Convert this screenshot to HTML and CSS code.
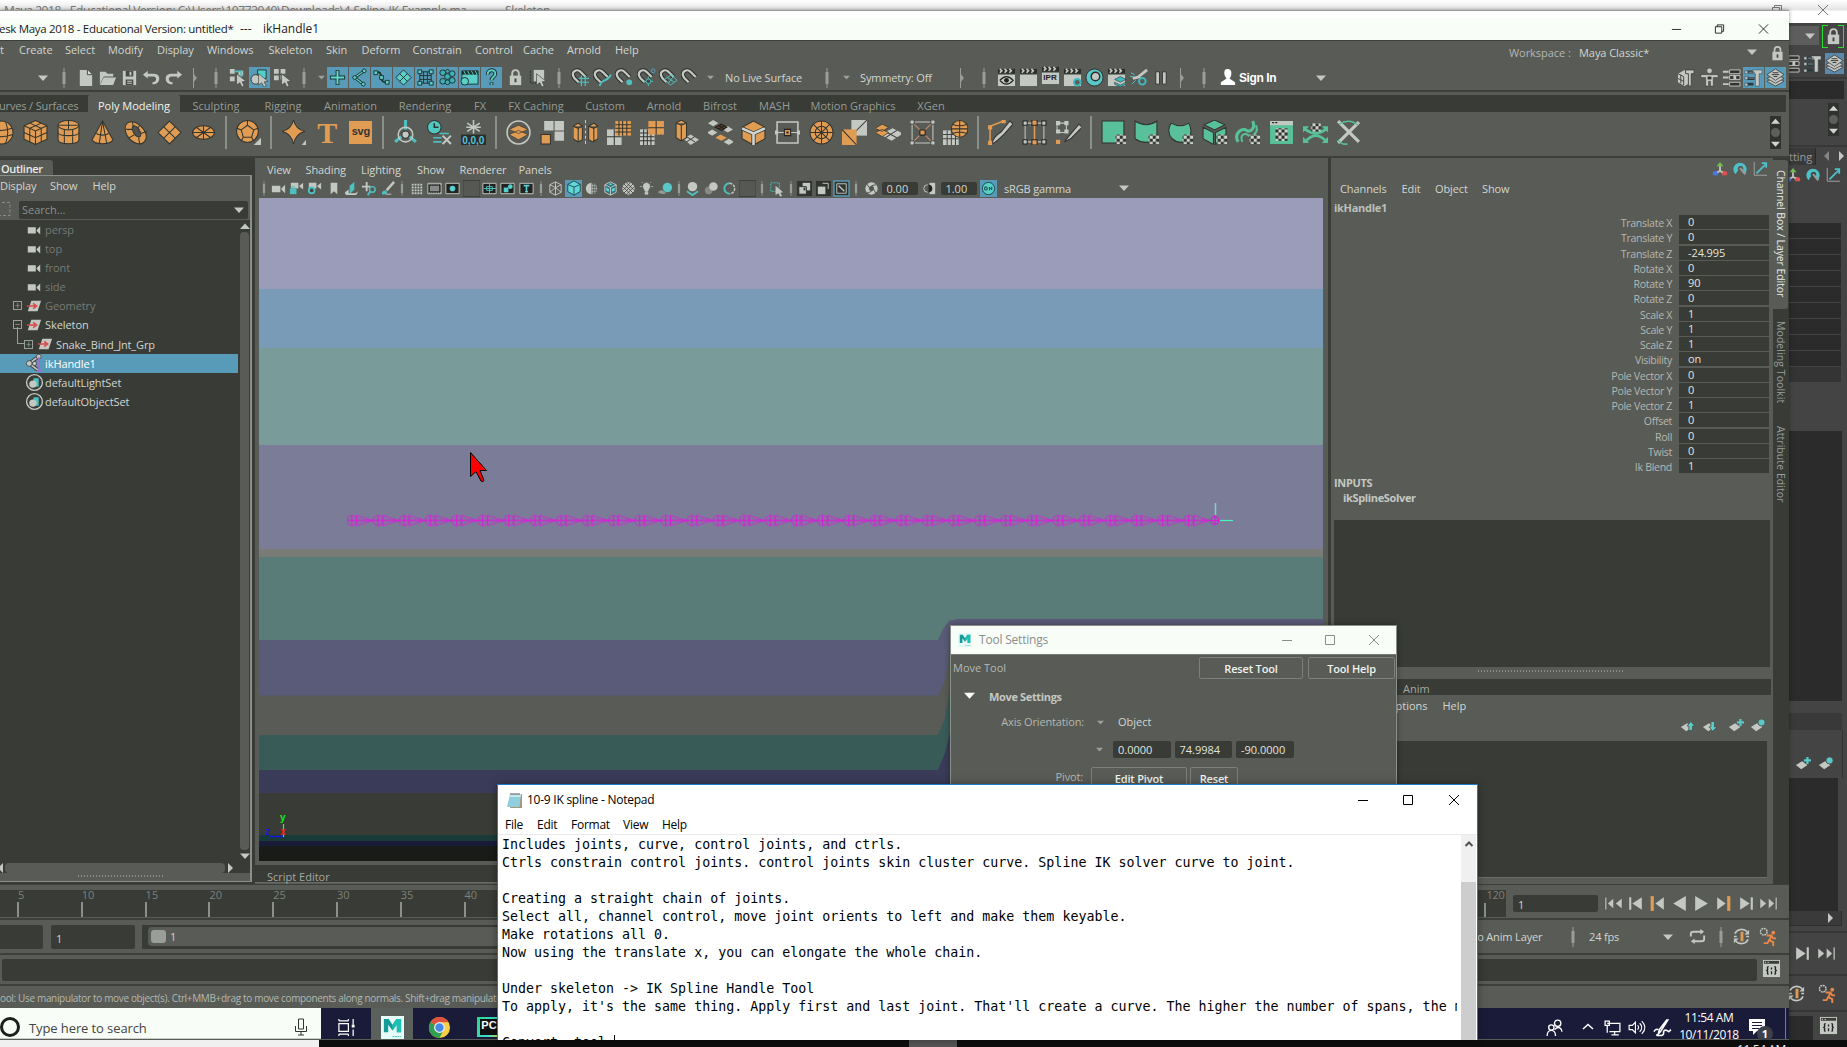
FILE: index.html
```html
<!DOCTYPE html>
<html lang="en">
<head>
<meta charset="utf-8">
<title>Maya</title>
<link rel="stylesheet" href="styles.css">
</head>
<body>
<svg class="sprite" aria-hidden="true">
<defs>
<pattern id="chk" width="6" height="6" patternUnits="userSpaceOnUse"><rect width="6" height="6" fill="#30332e"/><path d="M0 0h3v3H0zM3 3h3v3H3z" fill="#d0d4ce"/></pattern>
<pattern id="joints" x="87.5" y="312.500" width="26.15" height="20" patternUnits="userSpaceOnUse"><g fill="none" stroke="#e312e0"><circle cx="5.5" cy="10" r="5" opacity=".75"/><path d="M5.5 4.5v11M10.5 4.5v11" /><path d="M0 10h26.15" stroke-width="1.3"/><path d="M10.5 5l15.5 5-15.5 5" opacity=".75"/></g></pattern>
</defs>
<symbol id="down" viewBox="0 0 10 10"><path d="M0 2.5h10L5 8z"/></symbol>
<symbol id="up" viewBox="0 0 10 10"><path d="M0 8h10L5 2.5z"/></symbol>
<symbol id="rt" viewBox="0 0 10 10"><path d="M3 0v10l5-5z"/></symbol>
<symbol id="lf" viewBox="0 0 10 10"><path d="M8 0v10L3 5z"/></symbol>
<symbol id="sep" viewBox="0 0 6 20"><path d="M3 0v20" stroke="#9a9e98" fill="none"/><path d="M3 4v12" stroke="#9a9e98" stroke-width="3"/></symbol>
<symbol id="endsep" viewBox="0 0 6 20"><path d="M1.5 0v20" stroke="#9a9e98" fill="none"/><path d="M1 5l4 5-4 5z" fill="#9a9e98"/></symbol>
<symbol id="min" viewBox="0 0 12 12"><path d="M1 6.5h10" stroke="currentColor" fill="none"/></symbol>
<symbol id="max" viewBox="0 0 12 12"><path d="M1.5 1.5h9v9h-9z" stroke="currentColor" fill="none"/></symbol>
<symbol id="rest" viewBox="0 0 12 12"><path d="M1.5 3.5h7v7h-7zM3.5 3.500v-2h7v7h-2" stroke="currentColor" fill="none"/></symbol>
<symbol id="x" viewBox="0 0 12 12"><path d="M1 1l10 10M11 1L1 11" stroke="currentColor" fill="none"/></symbol>
<symbol id="new" viewBox="0 0 20 20"><path d="M4 2h8l5 5v12H4z"/><path d="M12 2v5h5" stroke="#444" fill="#ddd"/></symbol>
<symbol id="open" viewBox="0 0 20 20"><path d="M2 17V4h6l2 2h6v3H6z"/><path d="M6 10h13l-3 8H2z"/></symbol>
<symbol id="save" viewBox="0 0 20 20"><path d="M3 3h14v15H3z"/><path d="M6 3h8v6H6zM6 12h8v6H6z" fill="#474a45"/><path d="M10 4h2v4h-2zM7.500 13.500h5v1h-5zM7.500 15.500h5v1h-5z"/></symbol>
<symbol id="undo" viewBox="0 0 20 20"><path d="M6 3v8L1 7zM5 6h8c7 0 7 10 0 11h-2v-2c5 0 5-6 1-6H5z"/></symbol>
<symbol id="redo" viewBox="0 0 20 20"><path d="M14 3v8l5-4zM15 6H7c-7 0-7 10 0 11h2v-2c-5 0-5-6-1-6h7z"/></symbol>
<symbol id="cur" viewBox="0 0 20 20"><path d="M9 6l10 8-4 .5 2 4.500-2.500 1-2-4.500L9 18z" stroke="#444" stroke-width=".7"/></symbol>
<symbol id="selh" viewBox="0 0 20 20"><path d="M2 1h5v5H2zM2 9h5v5H2zM11 3h5v5h-5z"/><path d="M7 3.500h7v6" stroke="#4fc0c0" stroke-width="2" fill="none"/><use href="#cur"/></symbol>
<symbol id="selo" viewBox="0 0 20 20"><path d="M8 2h9v9H8z" fill="#4fd0c8" stroke="#333"/><circle cx="6" cy="12" r="5" stroke="#333"/><use href="#cur"/></symbol>
<symbol id="selc" viewBox="0 0 20 20"><path d="M1 1h5v5H1zM8 1h5v5H8zM1 8h5v5H1zM8 8h3v4H8z"/><use href="#cur"/></symbol>
<symbol id="m1" viewBox="0 0 20 20"><path d="M10 2v16M2 10h16" stroke="#20322f" stroke-width="4"/><path d="M10 3v14M3 10h14" stroke="#5adcd0" stroke-width="2"/></symbol>
<symbol id="m2" viewBox="0 0 20 20"><path d="M15 3L5 10l9 7" stroke="#20322f" stroke-width="3" fill="none"/><path d="M15 3L5 10l9 7" stroke="#5ad0c8" stroke-width="1.300" fill="none"/><g fill="#5ad0c8" stroke="#20322f"><circle cx="15" cy="3" r="2"/><circle cx="5" cy="10" r="2"/><circle cx="14" cy="17" r="2"/></g></symbol>
<symbol id="m3" viewBox="0 0 20 20"><path d="M3 5c12-4 1 12 14 10" stroke="#20322f" stroke-width="2" fill="none"/><path d="M2 3h4v4H2zM8 8h4v4H8zM14 13h4v4h-4z" fill="#5ad0c8" stroke="#20322f"/></symbol>
<symbol id="m4" viewBox="0 0 20 20"><path d="M10 2l8 8-8 8-8-8z" fill="#5ad0c8" stroke="#20322f"/><path d="M6 6l8 8M14 6l-8 8" stroke="#20322f"/></symbol>
<symbol id="m5" viewBox="0 0 20 20"><path d="M4 4h12v12H4zM8 4v12M12 4v12M4 8h12M4 12h12" fill="none" stroke="#20322f"/><path d="M2 2h4v4H2zM14 2h4v4h-4zM2 14h4v4H2zM14 14h4v4h-4z" fill="#5ad0c8" stroke="#20322f"/></symbol>
<symbol id="m6" viewBox="0 0 20 20"><g fill="#3fb0b8" stroke="#20322f"><circle cx="5" cy="5" r="3"/><circle cx="10" cy="3.500" r="2"/><circle cx="15" cy="6" r="3"/><circle cx="10" cy="9" r="3"/><circle cx="5" cy="14" r="3"/><circle cx="10" cy="15" r="2.500"/><circle cx="15" cy="13" r="3"/></g></symbol>
<symbol id="m7" viewBox="0 0 20 20"><path d="M2 3h17v14H2z" fill="#5ad0c8" stroke="#20322f"/><path d="M2 3h17v4H2z" fill="#20322f"/><path d="M4 3l2 4M8 3l2 4M12 3l2 4M16 3l2 4" stroke="#5ad0c8"/><circle cx="5" cy="14" r="4" fill="#5ad0c8" stroke="#20322f"/></symbol>
<symbol id="m8" viewBox="0 0 20 20"><path d="M6 7c0-6 8-6 8-1 0 4-4 3-4 7M10 15v3" stroke="#20322f" stroke-width="4" fill="none"/><path d="M6 7c0-6 8-6 8-1 0 4-4 3-4 7M10 15.500v2" stroke="#5ad0c8" stroke-width="2" fill="none"/></symbol>
<symbol id="lock" viewBox="0 0 20 20"><path d="M4 8h12v10H4z"/><path d="M6.500 9V6c0-5 7-5 7 0v3" fill="none" stroke="#c4c8c2" stroke-width="2"/><path d="M9 11h2v4H9z" fill="#444"/></symbol>
<symbol id="selm" viewBox="0 0 20 20"><path d="M6 2h11v12H6z"/><path d="M2.500 3v13h10" fill="none" stroke="#20322f" stroke-dasharray="2 1.500"/><use href="#cur"/></symbol>
<symbol id="mag" viewBox="0 0 20 20"><path d="M8 15L3.500 10.500c-5-6 3-11 7-6l5 5" fill="none" stroke="#2b2e2a" stroke-width="4.500"/><path d="M8 15L3.500 10.500c-5-6 3-11 7-6l5 5" fill="none" stroke="#c4c8c2" stroke-width="2.500"/></symbol>
<symbol id="g1" viewBox="0 0 20 20"><use href="#mag"/><path d="M11 8v11M15 8v11M8 11h11M8 15h11" stroke="#4fc0c0" stroke-width="1.300"/></symbol>
<symbol id="g2" viewBox="0 0 20 20"><use href="#mag"/><path d="M7 19c2-9 8-3 12-12" stroke="#4fc0c0" stroke-width="2" fill="none"/></symbol>
<symbol id="g3" viewBox="0 0 20 20"><use href="#mag"/><circle cx="15" cy="15" r="3" fill="#4fc0c0"/></symbol>
<symbol id="g4" viewBox="0 0 20 20"><use href="#mag"/><path d="M12 9v10M7 14h10" stroke="#4fc0c0"/><circle cx="12" cy="14" r="2.500" fill="#444" stroke="#4fc0c0"/><circle cx="17" cy="3" r="2" fill="none" stroke="#4fa0d0"/></symbol>
<symbol id="g5" viewBox="0 0 20 20"><use href="#mag"/><path d="M6 12l7-5 6 6-7 5zM9 10l7 5M15 9l-5 7" fill="none" stroke="#4fc0c0"/></symbol>
<symbol id="clap" viewBox="0 0 20 20"><path d="M1 7h18v12H1z"/><path d="M1 1h18v5H1z" fill="#2b2e2a"/><path d="M3 1l2 2-2 2M8 1l2 2-2 2M13 1l2 2-2 2" stroke="#c4c8c2" stroke-width="1.800" fill="none"/></symbol>
<symbol id="c1" viewBox="0 0 20 20"><use href="#clap"/><path d="M3 13q7-8 14 0q-7 8-14 0" fill="none" stroke="#222" stroke-width="1.300"/><circle cx="10" cy="13" r="2.500" fill="#222"/></symbol>
<symbol id="c4" viewBox="0 0 20 20"><use href="#clap"/><circle cx="15" cy="15" r="3.500" fill="#58605c" stroke="#3fb8c0" stroke-width="2"/></symbol>
<symbol id="c5" viewBox="0 0 20 20"><circle cx="10" cy="10" r="9" fill="#58c8c8" stroke="#2b2e2a"/><circle cx="11" cy="9" r="4.500" fill="#c4c8c2" stroke="#2b2e2a" stroke-width="1.500"/></symbol>
<symbol id="c6" viewBox="0 0 20 20"><use href="#clap"/><path d="M8 12l6-3 6 3-6 3zM8 15l6 3 6-3v2l-6 3-6-3z" fill="#3fb8c0" stroke="#2b2e2a" stroke-width=".6"/></symbol>
<symbol id="c7" viewBox="0 0 20 20"><path d="M19 2L9 10M4 11l8-2" stroke="#c4c8c2" stroke-width="3"/><path d="M1 9h4M3 17l4-4M2 5l4 2" stroke="#4fc0c0"/><circle cx="14" cy="14" r="3.500" fill="none" stroke="#3fb8c0" stroke-width="2"/></symbol>
<symbol id="c8" viewBox="0 0 20 20"><path d="M5 4h4v13H5zM12 4h4v13h-4z" stroke="#333"/></symbol>
<symbol id="user" viewBox="0 0 20 20"><path d="M7 3c0-3 8-3 7 3 0 3-1 4-2 5l6 4v3H3v-3l6-4C7 9 6 6 7 3z" fill="#fff"/></symbol>
<symbol id="r1" viewBox="0 0 20 20"><path d="M1 6l7-4 5 3v11l-5 3-7-4z"/><path d="M1 6l6 3v9M4 7v9M1 11l6 3" stroke="#444" fill="none"/><path d="M9 2h9v4h-3v13h-3V6H9z" stroke="#444"/></symbol>
<symbol id="r2" viewBox="0 0 20 20"><circle cx="10" cy="3" r="2.500"/><path d="M1 7h18v3h-5v9h-3v-5H9v5H6v-9H1z" stroke="#333" stroke-width=".5"/><path d="M8 9h4v3H8z" fill="#333"/></symbol>
<symbol id="r3" viewBox="0 0 20 20"><path d="M1 4h6M1 10h6M1 17h6" stroke="#c4c8c2" stroke-width="2"/><path d="M8 2h11v4H8zM8 8h11v4H8zM8 15h11v4H8z" fill="#333" stroke="#c4c8c2"/><path d="M12 8h3v4h-3z"/></symbol>
<symbol id="r4" viewBox="0 0 20 20"><path d="M3 4h8M3 11h8M3 17h7" stroke="#2b3a40" stroke-width="3"/><path d="M1 3h3v3H1zM1 9h3v3H1zM1 16h3v3H1zM5 4h6v1H5zM5 10h6v1H5zM9 2h10v4h-3v13h-4V6H9z" stroke="#2b3a40" stroke-width=".5"/></symbol>
<symbol id="r5" viewBox="0 0 20 20"><g stroke="#333" stroke-width=".8"><path d="M1 14l9 5 9-5-9-5z"/><path d="M1 11l9 5 9-5-9-5z"/><path d="M1 7l9-6 9 6-9 6z"/></g><path d="M6 7h8M7 5h6M8 9h4" stroke="#333"/></symbol>
<symbol id="s1" viewBox="0 0 24 24"><g fill="#e09c52" stroke="#33352f"><circle cx="12" cy="12" r="11"/><path d="M2 8q10 4 20 0M1 14q11 4 22 0M8 2q-4 10 0 20M16 2q4 10 0 20" fill="none"/></g></symbol>
<symbol id="s2" viewBox="0 0 24 24"><g fill="#e09c52" stroke="#33352f"><path d="M12 .5l11 5v13l-11 5-11-5v-13z"/><path d="M1 5.500l11 5 11-5M12 10.500v13M6.500 3l11 5v13M17.500 3l-11 5v13M1 12l11 5 11-5" fill="none"/></g></symbol>
<symbol id="s3" viewBox="0 0 24 24"><g fill="#e09c52" stroke="#33352f"><path d="M2 5v14c0 5 20 5 20 0V5z"/><ellipse cx="12" cy="5" rx="10" ry="4.500"/><path d="M2 12c0 4 20 4 20 0M8 9v13M16 9v13M12 1v8M3 5h18" fill="none"/></g></symbol>
<symbol id="s4" viewBox="0 0 24 24"><g fill="#e09c52" stroke="#33352f"><path d="M12 1L2 19c2 5 18 5 20 0z"/><path d="M12 1L9 22M12 1l4 21M6 13q6 3 12 0" fill="none"/></g></symbol>
<symbol id="s5" viewBox="0 0 24 24"><g stroke="#33352f"><path d="M4 3c8-5 20 7 18 15-3 9-14 4-18-3C2 11 1 6 4 3z" fill="#e09c52"/><ellipse cx="13" cy="11" rx="3" ry="6" transform="rotate(-32 13 11)" fill="#50534e"/><path d="M3 9l6 0M9 2l1 5M15 17l1 6M17 13l6-2M6 17l5-3M16 5l-2 3" fill="none"/></g></symbol>
<symbol id="s6" viewBox="0 0 24 24"><g fill="#e09c52" stroke="#33352f"><path d="M12 1l11 11-11 11L1 12z"/><path d="M6.500 6.500l11 11M17.500 6.500l-11 11" fill="none"/></g></symbol>
<symbol id="s7" viewBox="0 0 24 24"><g fill="#e09c52" stroke="#33352f"><ellipse cx="12" cy="12" rx="10.500" ry="6.500"/><path d="M1.500 12h21M12 5.500v13M5 7l14 10M19 7L5 17" fill="none"/></g></symbol>
<symbol id="s8" viewBox="0 0 24 24"><g fill="#e09c52" stroke="#33352f"><circle cx="11" cy="11" r="10.500"/><path d="M11 5l6 4.500-2 7H7l-2-7zM11 5V1M17 9.500l4-1.500M15 16.500l2 4M7 16.500l-2 4M5 9.500L1 8" fill="none"/></g><path d="M24 17v7h-7z" fill="#c4c8c2"/></symbol>
<symbol id="s9" viewBox="0 0 24 24"><path d="M12 0q2 9 11 11-9 2-11 12-2-10-11-12 9-2 11-11z" fill="#e09c52" stroke="#33352f"/><path d="M25 18v7h-6z" fill="#c4c8c2"/></symbol>
<symbol id="s12" viewBox="0 0 24 24"><path d="M12 0v9M2 21l6-5M22 21l-6-5" stroke="#4fc0c0" stroke-width="3"/><circle cx="12" cy="14" r="7" fill="none" stroke="#c4c8c2" stroke-width="1.500"/><circle cx="12" cy="14" r="3.500" fill="#c4c8c2" stroke="#333"/></symbol>
<symbol id="s13" viewBox="0 0 24 24"><circle cx="7" cy="7" r="6.500" fill="#4fc8c0" stroke="#333"/><path d="M7 3v4h4" stroke="#333" fill="none" stroke-width="1.500"/><path d="M12 13h9M6 17h8M6 21h8" stroke="#4fc0c0" stroke-width="1.500"/><path d="M15 15l8 8M23 15l-8 8" stroke="#c4c8c2" stroke-width="2"/></symbol>
<symbol id="s14" viewBox="0 0 24 24"><path d="M12 0v13M6 3l12 8M18 3L6 11M5 7h14" stroke="#c4c8c2" stroke-width="1.500"/><path d="M0 14h24v10H0z" fill="#2b2e2a"/></symbol>
<symbol id="p1" viewBox="0 0 24 24"><circle cx="12" cy="12" r="11" fill="none" stroke="#c4c8c2" stroke-width="1.500"/><path d="M3 14l9-4 9 4-9 5zM3 9l9-4 9 4-9 4z" fill="#e09c52" stroke="#33352f" stroke-width=".6"/></symbol>
<symbol id="p2" viewBox="0 0 24 24"><path d="M4 1h9v9H4zM14 1h9v9h-9zM14 11h9v9h-9z"/><path d="M1 14h9v9H1z" fill="#e09c52" stroke="#333"/></symbol>
<symbol id="p3" viewBox="0 0 24 24"><g fill="#e09c52" stroke="#33352f"><path d="M0 6l5-3 4 3v13l-4 2-5-3zM15 6l5-3 4 3v12l-5 3-4-2zM0 6l5 2 4-2M5 8v13M15 6l5 2 4-2M20 8v13"/></g><path d="M12 0v24" stroke="#c4c8c2" stroke-dasharray="3 2"/></symbol>
<symbol id="p4" viewBox="0 0 24 24"><path d="M0 9h14v15H0z"/><path d="M7 9v15M0 16h14" stroke="#333"/><path d="M8 1h15v14H8z" fill="#e09c52"/><path d="M8 4.500h15M8 8h15M8 11.500h15M11.500 1v14M15 1v14M19 1v14" stroke="#33352f"/></symbol>
<symbol id="p5" viewBox="0 0 24 24"><path d="M0 9h14v15H0z"/><path d="M3.500 9v15M7 9v15M10.500 9v15M0 12.500h14M0 16h14M0 20h14" stroke="#333"/><path d="M8 1h15v13H8z" fill="#e09c52"/><path d="M15.500 1v13M8 7.500h15" stroke="#33352f"/></symbol>
<symbol id="p6" viewBox="0 0 24 24"><path d="M9 18l7-4 8 5-8 5z"/><path d="M12 16l8 5M12 21l8-5" stroke="#444"/><path d="M2 3l5-3 5 3v14l-5 3-5-3zM2 3l5 2 5-2M7 5v15" fill="#e09c52" stroke="#33352f"/></symbol>
<symbol id="p7" viewBox="0 0 24 24"><path d="M0 3l5-3 5 3-5 3zM14 9l5-3 5 3-5 3zM-1 12l5-3 5 3-5 3zM15 21l5-3 5 3-5 3z"/><path d="M7 17l5-3 6 3-5 3z" fill="#e09c52"/><path d="M7 7l6-3 5 3-5 3zM10 5l6 4M10 9l6-4" fill="#5a4028" stroke="#222"/></symbol>
<symbol id="p8" viewBox="0 0 24 24"><path d="M12 1l11 6v11l-11 6-11-6V7z" fill="#e09c52" stroke="#33352f"/><path d="M1 8l11 5 11-5M12 13v11" fill="none" stroke="#333" stroke-width="4"/><path d="M1 8l11 5 11-5M12 13v11" fill="none" stroke="#d0d4ce" stroke-width="2.500"/></symbol>
<symbol id="p9" viewBox="0 0 24 24"><path d="M2 2h20v20H2z" fill="none" stroke="#c4c8c2" stroke-width="1.500"/><path d="M0 12h24" stroke="#c4c8c2"/><path d="M0 10h3v4H0zM21 10h3v4h-3z"/><path d="M9 9h6v6H9z" fill="#e09c52" stroke="#222"/><path d="M11 11h2v2h-2z" fill="#222"/></symbol>
<symbol id="p10" viewBox="0 0 24 24"><g fill="#e09c52" stroke="#33352f"><circle cx="12" cy="12" r="11"/><circle cx="12" cy="12" r="6"/><path d="M12 1v22M1 12h22M4 4l16 16M20 4L4 20"/></g></symbol>
<symbol id="p11" viewBox="0 0 24 24"><path d="M9 0h15v15H9z"/><path d="M9 15L24 0" stroke="#444"/><path d="M0 9h14v15H0z" fill="#e09c52"/><path d="M0 9l14 15" stroke="#33352f"/></symbol>
<symbol id="p12" viewBox="0 0 24 24"><path d="M4 14l12-6 10 5-11 7z"/><path d="M9 11l11 6M20 10L9 17" stroke="#444"/><path d="M-1 12l7-3 6 3-6 4zM-1 8l7-4 6 3-6 4z" fill="#e09c52" stroke="#33352f" stroke-width=".7"/></symbol>
<symbol id="p13" viewBox="0 0 24 24"><path d="M2 2h20v20H2z" fill="none" stroke="#c4c8c2"/><path d="M2 2l20 20M22 2L2 22" stroke="#c89070"/><path d="M0 0h4v4H0zM20 0h4v4h-4zM0 20h4v4H0zM20 20h4v4h-4z" stroke="#222" stroke-width=".7"/><path d="M9.500 9.500h5v5h-5z" fill="#e09c52" stroke="#222"/></symbol>
<symbol id="p14" viewBox="0 0 24 24"><path d="M0 10h15v14H0z"/><path d="M4 10v14M8 10v14M12 10v14M0 14h15M0 18h15" stroke="#444"/><circle cx="16" cy="8.500" r="8" fill="#e09c52" stroke="#33352f"/><path d="M8 8.500h16M16 0v16M9 4q7 3 14 0M9 13q7-3 14 0" stroke="#33352f" fill="none"/></symbol>
<symbol id="q1" viewBox="0 0 24 24"><path d="M2 23V6L15 1" fill="none" stroke="#e09c52" stroke-width="1.500"/><path d="M4 23c0-5 6-10 9-12l8-10 3 3-8 9c-3 3-8 8-12 10z" stroke="#333"/><path d="M0 5h4v4H0zM13 0h4v3h-4zM0 20h4v4H0z" fill="#e09c52"/></symbol>
<symbol id="q2" viewBox="0 0 24 24"><path d="M3 3h18v18H3z" fill="none" stroke="#c4c8c2"/><path d="M1 1h4v4H1zM19 1h4v4h-4zM1 19h4v4H1zM19 19h4v4h-4z" stroke="#222"/><path d="M12 3v18" stroke="#e09c52" stroke-width="1.500"/><path d="M9.500 0h5v5h-5zM9.500 19h5v5h-5z" fill="#e09c52" stroke="#222"/></symbol>
<symbol id="q3" viewBox="0 0 24 24"><path d="M1 3h9v9H1z" fill="none" stroke="#c4c8c2"/><path d="M0 1h4v4H0zM8 1h4v4H8zM0 9h4v4H0zM8 9h4v4H8z"/><path d="M8 21l4-5L22 4l3 3-11 11z" stroke="#333"/><path d="M0 19h4v4H0z" fill="#e09c52"/></symbol>
<symbol id="u0" viewBox="0 0 24 24"><path d="M14 14h10v9H14z" fill="url(#chk)"/></symbol>
<symbol id="u1" viewBox="0 0 24 24"><path d="M1 1h21v21H1z" fill="#58c09a" stroke="#333"/><use href="#u0"/></symbol>
<symbol id="u2" viewBox="0 0 24 24"><path d="M1 1q11 7 21 0v17q-11 7-21 0z" fill="#58c09a" stroke="#333"/><use href="#u0"/></symbol>
<symbol id="u3" viewBox="0 0 24 24"><path d="M3 3q9 5 17 0 4 8 0 15-8 7-16 0-6-7-1-15z" fill="#58c09a" stroke="#333"/><use href="#u0"/></symbol>
<symbol id="u4" viewBox="0 0 24 24"><path d="M12 0l10 4.500-10 5-10-5zM1 7l10 5v11.500L1 18zM13 12l10-5v11l-10 5.500z" fill="#58c09a" stroke="#333"/><use href="#u0"/></symbol>
<symbol id="u5" viewBox="0 0 24 24"><path d="M3 21C-2 12 8 7 11 10c4 2 9-2 6-9" fill="none" stroke="#58c09a" stroke-width="3"/><path d="M7 21c-3-8 4-9 6-6 5 1 10-4 7-10" fill="none" stroke="#58c09a" stroke-width="2"/><use href="#u0"/></symbol>
<symbol id="u6" viewBox="0 0 24 24"><path d="M1 1h22v22H1z" fill="#58c09a"/><path d="M1 1h22v4H1z"/><path d="M3 2h2v1H3zM6 2h2v1H6z" fill="#222"/><path d="M6 8h12v12H6z" fill="url(#chk)"/></symbol>
<symbol id="u7" viewBox="0 0 24 24"><path d="M2 9q10 7 20 0M3 20q9-10 19 0" stroke="#58c09a" stroke-width="2.500" fill="none"/><path d="M0 6h6l-6 6zM24 6h-6l6 6zM0 22v-6l6 6zM24 22v-6l-6 6z" fill="#58c09a"/><path d="M8 3h9v8H8z" fill="url(#chk)"/></symbol>
<symbol id="u8" viewBox="0 0 24 24"><path d="M2 1l20 20M22 2L2 22" stroke="#c4c8c2" stroke-width="3"/><path d="M3 4q10-6 18 1M2 19q3 5 9 4" stroke="#58c09a" fill="none" stroke-width="1.500"/></symbol>
<symbol id="cam" viewBox="0 0 18 18"><path d="M2 6h9v7H2zM16 5v9l-4-4V9z"/></symbol>
<symbol id="camb" viewBox="0 0 18 18"><path d="M3 3h8v6H3zM16 3v7l-4-3V6z"/></symbol>
<symbol id="v2" viewBox="0 0 18 18"><use href="#camb"/><path d="M2 9h7v6H2z" fill="#4fc0c0"/><path d="M4 9V7h3v2" fill="none" stroke="#4fc0c0"/></symbol>
<symbol id="v3" viewBox="0 0 18 18"><use href="#camb"/><circle cx="6" cy="11" r="3" fill="#444" stroke="#4fc0c0" stroke-width="2"/></symbol>
<symbol id="v4" viewBox="0 0 18 18"><path d="M6 3h7v12l-3.500-3L6 15z"/></symbol>
<symbol id="v5" viewBox="0 0 18 18"><path d="M7 6l5-4v8l-5 5z" fill="#4fc0c0"/><path d="M2 13l4-3v4h7l3-2-2 4H3z"/></symbol>
<symbol id="v6" viewBox="0 0 18 18"><path d="M1 7h9M6 2v10" stroke="#c4c8c2" stroke-width="2"/><circle cx="12" cy="10" r="3" fill="none" stroke="#4fc0c0" stroke-width="1.500"/><path d="M10 12l-3 4" stroke="#4fc0c0" stroke-width="2"/></symbol>
<symbol id="v7" viewBox="0 0 18 18"><path d="M16 2L8 11" stroke="#c4c8c2" stroke-width="2.500"/><path d="M3 15c0-4 3-5 5-3s-1 4-5 3z" fill="#4fc0c0"/><path d="M7 15h6" stroke="#c4c8c2"/></symbol>
<symbol id="w1" viewBox="0 0 18 18"><path d="M4 4h11v11H4z"/><path d="M6.500 4v11M9.500 4v11M12.500 4v11M4 6.500h11M4 9.500h11M4 12.500h11" stroke="#3b3e3a" stroke-width=".8"/></symbol>
<symbol id="fr" viewBox="0 0 18 18"><path d="M2 3.500h14v11H2z" fill="#20231f" stroke="#c4c8c2" stroke-width="1"/></symbol>
<symbol id="w2" viewBox="0 0 18 18"><use href="#fr"/><path d="M3 4.500h13M3 13.500h13" stroke="#c4c8c2" stroke-dasharray="1 1"/><path d="M4 6h10v6H4z" fill="#888"/></symbol>
<symbol id="w3" viewBox="0 0 18 18"><use href="#fr"/><circle cx="9" cy="9" r="3" fill="#58d0d0"/></symbol>
<symbol id="w4" viewBox="0 0 18 18"><path d="M0 .5h18v17H0z" fill="#555853" stroke="#3c3f3a"/></symbol>
<symbol id="w5" viewBox="0 0 18 18"><use href="#fr"/><path d="M9 4v10M3 9h13M6 7h6v4H6z" fill="none" stroke="#4fc0c0"/></symbol>
<symbol id="w6" viewBox="0 0 18 18"><use href="#fr"/><circle cx="12" cy="7" r="2.500" fill="#58d0d0"/><path d="M5 8h5v5H5z" fill="#58d0d0"/></symbol>
<symbol id="w7" viewBox="0 0 18 18"><use href="#fr"/><path d="M6 6h6M9 6v7M7.500 12.500h3" stroke="#58d0d0" stroke-width="1.700"/></symbol>
<symbol id="y1" viewBox="0 0 18 18"><path d="M9 2l6 3v8l-6 3-6-3V5zM3 5l6 3 6-3M9 8v8M9 2v6l-6 5M9 8l6 5" fill="none" stroke="#c4c8c2"/></symbol>
<symbol id="y2" viewBox="0 0 18 18"><path d="M9 1l7 4v8l-7 4-7-4V5z" fill="#60d8d8" stroke="#1d4448"/><path d="M2 5l7 3 7-3M9 8v9" fill="none" stroke="#1d4448"/></symbol>
<symbol id="y3" viewBox="0 0 18 18"><circle cx="9" cy="9" r="6"/><path d="M9 3a6 6 0 010 12z" fill="#50534e"/><path d="M10 4v11M12 4v10M14 6v6M9 6h5M9 9h6M9 12h5" stroke="#c4c8c2" stroke-width=".6"/></symbol>
<symbol id="y4" viewBox="0 0 18 18"><path d="M9 2l6 3v8l-6 3-6-3V5z" fill="#3a7078" stroke="#c4c8c2"/><path d="M3 5l6 3 6-3M9 8v8" fill="none" stroke="#c4c8c2"/><path d="M4.500 8l3 1.500v3l-3-1.500zM13.500 8l-3 1.500v3l3-1.500zM7 4.500l2-1 2 1-2 1z" fill="#60d8d8"/></symbol>
<symbol id="y5" viewBox="0 0 18 18"><circle cx="9" cy="9" r="6.500"/><path d="M4 4l10 10M7 3l8 8M3 7l8 8M14 4L4 14M11 3l-8 8M15 7l-8 8" stroke="#333" stroke-width=".8"/></symbol>
<symbol id="y6" viewBox="0 0 18 18"><path d="M5.500 7c0-5 7-5 7 0 0 2-2 3-2 5h-3c0-2-2-3-2-5zM7.500 13h3v2h-3zM2 7h2M14 7h2M4 2l1 1M14 2l-1 1" stroke="#c4c8c2" stroke-width=".8"/></symbol>
<symbol id="y7" viewBox="0 0 18 18"><circle cx="11" cy="8" r="5" fill="#58c8c8"/><path d="M1 13q2-3 5-2l4 3q-5 2-9-1z" fill="#999"/></symbol>
<symbol id="z1" viewBox="0 0 18 18"><circle cx="9" cy="7" r="5"/><path d="M3 12l6 4 6-4" stroke="#4fc0c0" fill="none" stroke-width="2"/></symbol>
<symbol id="z2" viewBox="0 0 18 18"><circle cx="6" cy="11" r="4" fill="#888"/><circle cx="11" cy="7" r="4.500"/></symbol>
<symbol id="z3" viewBox="0 0 18 18"><path d="M9 3.500a5.500 5.500 0 000 11" stroke="#4fc0c0" stroke-width="2" fill="none"/><path d="M9 3.500a5.500 5.500 0 010 11" stroke="#c4c8c2" stroke-width="1.500" stroke-dasharray="3 1" fill="none"/></symbol>
<symbol id="z4" viewBox="0 0 18 18"><path d="M3 3h9v9H3z" fill="none" stroke="#4fc0c0" stroke-dasharray="2 1"/><path d="M8 6l8 7-3 .5 2 3.500-2 .5-2-3.500-3 2z"/></symbol>
<symbol id="z5" viewBox="0 0 18 18"><path d="M1 1h16v16H1z" fill="#30332e"/><path d="M7 3h8v8H7z"/><path d="M3 7h8v8H3z" stroke="#30332e"/><path d="M8 8h2v3H8z" fill="#333"/></symbol>
<symbol id="z6" viewBox="0 0 18 18"><path d="M1 1h16v16H1z" fill="#30332e"/><path d="M8 3.500h6v6" fill="none" stroke="#c4c8c2"/><path d="M3 7h8v8H3z"/></symbol>
<symbol id="z7" viewBox="0 0 18 18"><path d="M1 1h16v16H1z" fill="#30332e" stroke="#589bb8" stroke-width="1.500"/><path d="M4 4h10v10H4z" fill="none" stroke="#c4c8c2"/><path d="M6 6l6 6" stroke="#c4c8c2" stroke-width="1.500"/></symbol>
<symbol id="ap" viewBox="0 0 18 18"><circle cx="9" cy="9" r="6.500"/><path d="M9 6l2.500 1.500v3L9 12l-2.500-1.500v-3z" fill="#50534e"/><path d="M9 6l5-1M11.500 10l2 4M9 12l-5 2M6.500 8L4 4" stroke="#50534e"/></symbol>
<symbol id="ex" viewBox="0 0 18 18"><path d="M9 3h6v12H9z"/><path d="M8 5a4 4 0 010 8z" fill="#222"/><path d="M7 5a4 4 0 000 8" stroke="#c4c8c2" fill="none"/></symbol>
<symbol id="on" viewBox="0 0 18 18"><circle cx="9" cy="9" r="6.500" fill="#58d0c8" stroke="#1d4448"/><path d="M5 7.500h2.500v3H5zM10 11V7.500l2.500 3V7" fill="none" stroke="#1d4448"/></symbol>
<symbol id="grp" viewBox="0 0 18 18"><path d="M6 3h11l-4 12H2z"/><path d="M1 9h9M8 6l4 3-4 3" stroke="#d84848" stroke-width="1.700" fill="none"/></symbol>
<symbol id="ikh" viewBox="0 0 18 18"><path d="M12 3L4 9l8 6" fill="none" stroke="#444" stroke-width="3.500"/><path d="M12 3L4 9l8 6" fill="none" stroke="#c4c8c2" stroke-width="1.500"/><g stroke="#444" stroke-width=".8"><circle cx="13" cy="2.500" r="2.300"/><circle cx="4" cy="9" r="2.700"/><circle cx="9" cy="9" r="2"/></g><path d="M13 3v13h3" stroke="#9a70d0" stroke-width="2" fill="none"/></symbol>
<symbol id="set" viewBox="0 0 18 18"><circle cx="9" cy="9" r="7.500" fill="none" stroke="#c4c8c2" stroke-width="1.300"/><path d="M8 5h5v8H8z" fill="#4fc0c0"/><circle cx="7.500" cy="10.500" r="3.500"/></symbol>
<symbol id="axis" viewBox="0 0 18 18"><path d="M9 1l4 5H5z" fill="#70c050"/><path d="M1 12l5-1 1 5H1z" fill="#4878e8"/><path d="M17 12l-5-1-1 5h6z" fill="#e05050"/><path d="M9 6v5l-3 2M9 11l3 2" stroke="#c4c8c2" stroke-width="2" fill="none"/></symbol>
<symbol id="dial" viewBox="0 0 18 18"><path d="M4 15a7.500 7.500 0 1110 0l-3-4a3 3 0 10-4-1z" fill="#4fc0c8"/><path d="M9 8l6 7" stroke="#999" stroke-width="2.500"/></symbol>
<symbol id="graph" viewBox="0 0 18 18"><path d="M2.500 1v15H17" stroke="#aaa" fill="none"/><path d="M5 14L15 4M11 2.500h5v5" stroke="#4fc0c8" stroke-width="2" fill="none"/></symbol>
<symbol id="l0" viewBox="0 0 18 18"><path d="M1 10l7-4 6 4-7 5z"/></symbol>
<symbol id="l1" viewBox="0 0 18 18"><use href="#l0"/><path d="M12 4l5 5h-3v5h-4V9H8z" fill="#58d0d0" stroke="#50534e"/></symbol>
<symbol id="l2" viewBox="0 0 18 18"><use href="#l0"/><path d="M12 15l5-5h-3V4h-4v6H8z" fill="#58d0d0" stroke="#50534e"/></symbol>
<symbol id="l3" viewBox="0 0 18 18"><use href="#l0"/><path d="M14 1v8M10 5h8" stroke="#58c8c8" stroke-width="2.500"/></symbol>
<symbol id="l4" viewBox="0 0 18 18"><use href="#l0"/><circle cx="13" cy="5" r="4" fill="#58c8c8" stroke="#50534e"/></symbol>
<symbol id="t1" viewBox="0 0 18 18"><path d="M1 3h1.500v12H1zM9 4v10L3.500 9zM17 4v10l-6-5z" stroke="#3c3f3a" stroke-width=".3"/></symbol>
<symbol id="t2" viewBox="0 0 18 18"><path d="M3 3h2v12H3zM15 3v12L6 9z"/></symbol>
<symbol id="t3" viewBox="0 0 18 18"><path d="M2.500 2h3v14h-3z" fill="#e09c52"/><path d="M15 3v12L7 9z"/></symbol>
<symbol id="t4" viewBox="0 0 18 18"><path d="M15 2v14L3 9z"/></symbol>
<symbol id="n1" viewBox="0 0 20 20"><path d="M3 10V7q0-2 3-2h8M17 9v4q0 2-3 2H6" stroke="#c4c8c2" stroke-width="2" fill="none"/><path d="M13 2l4 3-4 3zM7 12l-4 3 4 3z"/></symbol>
<symbol id="n2" viewBox="0 0 20 20"><path d="M3 7a8 8 0 0113-2M17 13a8 8 0 01-13 2M2 10h3M15 10h3" stroke="#c4c8c2" stroke-width="1.700" fill="none"/><path d="M18 3v5h-5zM2 17v-5h5z"/><path d="M9 5h3v10H9z" fill="#e09c52"/></symbol>
<symbol id="n3" viewBox="0 0 20 20"><circle cx="5" cy="5" r="3.500" fill="none" stroke="#c4c8c2" stroke-width="1.500" stroke-dasharray="2 .7"/><circle cx="15" cy="6" r="2" fill="#e88848"/><path d="M8 9h5l-2 5 4 2v4M11 13l-2 4H5M13 9l2 3h3" stroke="#e88848" stroke-width="2" fill="none"/></symbol>
<symbol id="scr" viewBox="0 0 20 20"><path d="M1 1h18v18H1z"/><path d="M2 2h16v3H2z" fill="#3a3d38"/><path d="M3 3.500h1M6 3.500h1" stroke="#fff"/><path d="M7 8c-2 0-1 2-1 3l-1 1 1 1c0 1-1 3 1 3M13 8c2 0 1 2 1 3l1 1-1 1c0 1 1 3-1 3M10 9v2M10 13v3" stroke="#222" fill="none" stroke-width="1.400"/></symbol>
<symbol id="maya" viewBox="0 0 24 24"><path d="M0 0h24v24H0z" fill="#e6fbf8"/><path d="M3 17V3h5l4 6 4-6h5v14h-4.500V9L12 15 7.500 9v8z" fill="#149a98"/><path d="M12 9l4-6h5v14h-4.500V9L12 15z" fill="#1fc0b4"/><path d="M12 21.500h9" stroke="#48b8b0" stroke-dasharray="2 .6"/></symbol>
</svg>

<!-- window behind -->
<section class="back">
  <div class="back-title"><span class="bt1">Maya 2018 - Educational Version: C:\Users\10773040\Downloads\4-Spline-IK-Example.ma</span><span class="bt2">Skeleton</span><span class="bctl"><svg class="i12"><use href="#min"/></svg><svg class="i12"><use href="#rest"/></svg><svg class="i12"><use href="#x"/></svg></span></div>
  <div class="back-side">
    <div class="b-top"><span class="b-drop"><svg class="i10"><use href="#down"/></svg></span><span class="b-lock"><svg class="i18"><use href="#lock"/></svg></span></div>
    <div class="b-icons"><svg class="i20"><use href="#r3"/></svg><svg class="i20"><use href="#r4"/></svg><span class="hl"><svg class="i20"><use href="#r5"/></svg></span></div>
    <div class="b-tabs"></div>
    <div class="b-shelf"><span class="scroll"><svg class="i10"><use href="#up"/></svg><i></i><svg class="i10"><use href="#down"/></svg></span></div>
    <div class="b-set"><span>tting</span><svg class="i10 dim"><use href="#lf"/></svg><svg class="i10"><use href="#rt"/></svg></div>
    <div class="b-axis"><svg class="i16"><use href="#axis"/></svg><svg class="i16"><use href="#dial"/></svg><svg class="i16"><use href="#graph"/></svg></div>
    <div class="b-fields"><i></i><i></i><i></i><i></i><i></i><i></i><i></i><i></i><i></i><i class="last"></i></div>
    <div class="b-box1"></div>
    <div class="b-strip"></div>
    <div class="b-lay"><svg class="i16"><use href="#l3"/></svg><svg class="i16"><use href="#l4"/></svg></div>
    <div class="b-box2"></div>
    <div class="b-arr"><svg class="i10"><use href="#rt"/></svg></div>
    <div class="b-row"><svg class="i18 flip"><use href="#t2"/></svg><svg class="i18 flip"><use href="#t1"/></svg></div>
    <div class="b-row two"><svg class="i20"><use href="#n2"/></svg><svg class="i20"><use href="#n3"/></svg></div>
    <div class="b-cmd"><i></i><svg class="i20"><use href="#scr"/></svg></div>
  </div>
</section>

<!-- main window -->
<section class="maya">
  <header class="title"><span class="t-a">esk Maya 2018 - Educational Version: untitled*</span><span class="t-b">---</span><span class="t-c">ikHandle1</span><span></span><svg class="i12"><use href="#min"/></svg><svg class="i12"><use href="#rest"/></svg><svg class="i12"><use href="#x"/></svg></header>
  <nav class="menubar"><span>t</span><span>Create</span><span>Select</span><span>Modify</span><span>Display</span><span>Windows</span><span>Skeleton</span><span>Skin</span><span>Deform</span><span>Constrain</span><span>Control</span><span>Cache</span><span>Arnold</span><span>Help</span><span></span><span class="ws dimt">Workspace :</span><span class="ws">Maya Classic*</span><svg class="i10 ws"><use href="#down"/></svg><svg class="i18 ws"><use href="#lock"/></svg></nav>
  <div class="status">
    <svg class="i10"><use href="#down"/></svg><svg class="sp"><use href="#sep"/></svg>
    <svg class="i20"><use href="#new"/></svg><svg class="i20"><use href="#open"/></svg><svg class="i20"><use href="#save"/></svg><svg class="i20"><use href="#undo"/></svg><svg class="i20"><use href="#redo"/></svg><svg class="sp"><use href="#endsep"/></svg><svg class="sp"><use href="#sep"/></svg>
    <svg class="i20"><use href="#selh"/></svg><span class="hl"><svg class="i18"><use href="#selo"/></svg></span><svg class="i20"><use href="#selc"/></svg><svg class="sp"><use href="#sep"/></svg><svg class="i6"><use href="#down"/></svg>
    <span class="hl"><svg class="i18"><use href="#m1"/></svg></span><span class="hl"><svg class="i18"><use href="#m2"/></svg></span><span class="hl"><svg class="i18"><use href="#m3"/></svg></span><span class="hl"><svg class="i18"><use href="#m4"/></svg></span><span class="hl"><svg class="i18"><use href="#m5"/></svg></span><span class="hl"><svg class="i18"><use href="#m6"/></svg></span><span class="hl"><svg class="i18"><use href="#m7"/></svg></span><span class="hl"><svg class="i18"><use href="#m8"/></svg></span>
    <svg class="i18"><use href="#lock"/></svg><svg class="i18"><use href="#selm"/></svg><svg class="sp"><use href="#sep"/></svg>
    <svg class="i18"><use href="#g1"/></svg><svg class="i18"><use href="#g2"/></svg><svg class="i18"><use href="#g3"/></svg><svg class="i18"><use href="#g4"/></svg><svg class="i18"><use href="#g5"/></svg><svg class="i18"><use href="#mag"/></svg><svg class="i6"><use href="#down"/></svg>
    <span class="txt">No Live Surface</span><svg class="sp"><use href="#sep"/></svg><svg class="i6"><use href="#down"/></svg><span class="txt">Symmetry: Off</span><svg class="sp"><use href="#endsep"/></svg><svg class="sp"><use href="#sep"/></svg>
    <svg class="i18"><use href="#c1"/></svg><svg class="i18"><use href="#clap"/></svg><span class="ipr"><svg class="i18"><use href="#clap"/></svg><b>IPR</b></span><svg class="i18"><use href="#c4"/></svg><svg class="i18"><use href="#c5"/></svg><svg class="i18"><use href="#c6"/></svg><svg class="i18"><use href="#c7"/></svg><svg class="i18"><use href="#c8"/></svg>
    <svg class="sp"><use href="#endsep"/></svg><svg class="sp"><use href="#sep"/></svg><svg class="i18"><use href="#user"/></svg><b class="sign">Sign In</b><svg class="i10"><use href="#down"/></svg><span></span>
    <svg class="i20"><use href="#r1"/></svg><svg class="i20"><use href="#r2"/></svg><svg class="i20"><use href="#r3"/></svg><span class="hl"><svg class="i20"><use href="#r4"/></svg></span><span class="hl"><svg class="i20"><use href="#r5"/></svg></span>
  </div>
  <div class="tabs"><span>urves / Surfaces</span><span class="on">Poly Modeling</span><span>Sculpting</span><span>Rigging</span><span>Animation</span><span>Rendering</span><span>FX</span><span>FX Caching</span><span>Custom</span><span>Arnold</span><span>Bifrost</span><span>MASH</span><span>Motion Graphics</span><span>XGen</span></div>
  <div class="shelf">
    <span class="s"><svg><use href="#s1"/></svg></span><span class="s"><svg><use href="#s2"/></svg></span><span class="s"><svg><use href="#s3"/></svg></span><span class="s"><svg><use href="#s4"/></svg></span><span class="s"><svg><use href="#s5"/></svg></span><span class="s"><svg><use href="#s6"/></svg></span><span class="s"><svg><use href="#s7"/></svg></span><i></i>
    <span class="s"><svg><use href="#s8"/></svg></span><i></i>
    <span class="s"><svg><use href="#s9"/></svg></span><span class="s bigt">T</span><span class="s svgt"><b>svg</b></span><i></i>
    <span class="s"><svg><use href="#s12"/></svg></span><span class="s"><svg><use href="#s13"/></svg></span><span class="s zero"><svg><use href="#s14"/></svg><b>0,0,0</b></span><i></i>
    <span class="s"><svg><use href="#p1"/></svg></span><span class="s"><svg><use href="#p2"/></svg></span><span class="s"><svg><use href="#p3"/></svg></span><span class="s"><svg><use href="#p4"/></svg></span><span class="s"><svg><use href="#p5"/></svg></span><span class="s"><svg><use href="#p6"/></svg></span><span class="s"><svg><use href="#p7"/></svg></span><span class="s"><svg><use href="#p8"/></svg></span><span class="s"><svg><use href="#p9"/></svg></span><span class="s"><svg><use href="#p10"/></svg></span><span class="s"><svg><use href="#p11"/></svg></span><span class="s"><svg><use href="#p12"/></svg></span><span class="s"><svg><use href="#p13"/></svg></span><span class="s"><svg><use href="#p14"/></svg></span><i></i>
    <span class="s"><svg><use href="#q1"/></svg></span><span class="s"><svg><use href="#q2"/></svg></span><span class="s"><svg><use href="#q3"/></svg></span><i></i>
    <span class="s"><svg><use href="#u1"/></svg></span><span class="s"><svg><use href="#u2"/></svg></span><span class="s"><svg><use href="#u3"/></svg></span><span class="s"><svg><use href="#u4"/></svg></span><span class="s"><svg><use href="#u5"/></svg></span><span class="s"><svg><use href="#u6"/></svg></span><span class="s"><svg><use href="#u7"/></svg></span><span class="s"><svg><use href="#u8"/></svg></span>
    <span class="scroll"><svg class="i10"><use href="#up"/></svg><em></em><svg class="i10"><use href="#down"/></svg></span>
  </div>
  <main class="main">
    <aside class="outliner">
      <div class="o-tabs"><b>Outliner</b></div>
      <div class="o-body">
        <div class="o-menu"><span>Display</span><span>Show</span><span>Help</span></div>
        <div class="o-search"><svg width="12" height="16" viewBox="0 0 12 16"><path d="M-3 1.500h13v13H-3" fill="none" stroke="#8a8e88" stroke-dasharray="3 2"/></svg><div><span>Search...</span><svg class="i10"><use href="#down"/></svg></div></div>
        <div class="o-list">
          <ul>
            <li class="off"><svg class="i16"><use href="#cam"/></svg>persp</li>
            <li class="off"><svg class="i16"><use href="#cam"/></svg>top</li>
            <li class="off"><svg class="i16"><use href="#cam"/></svg>front</li>
            <li class="off"><svg class="i16"><use href="#cam"/></svg>side</li>
            <li class="off br"><span class="box">+</span><svg class="i16"><use href="#grp"/></svg>Geometry</li>
            <li class="br"><span class="box">−</span><svg class="i16"><use href="#grp"/></svg>Skeleton</li>
            <li class="br kid"><span class="elbow"></span><span class="box">+</span><svg class="i16"><use href="#grp"/></svg>Snake_Bind_Jnt_Grp</li>
            <li class="sel"><svg class="i18"><use href="#ikh"/></svg>ikHandle1</li>
            <li><svg class="i18"><use href="#set"/></svg>defaultLightSet</li>
            <li><svg class="i18"><use href="#set"/></svg>defaultObjectSet</li>
          </ul>
          <div class="vs"><svg class="i10"><use href="#up"/></svg><i></i><svg class="i10"><use href="#down"/></svg></div>
        </div>
        <div class="hs"><svg class="i10"><use href="#lf"/></svg><i></i><svg class="i10"><use href="#rt"/></svg></div>
        <div class="grip"></div>
      </div>
    </aside>
    <section class="view">
      <div class="v-menu"><span>View</span><span>Shading</span><span>Lighting</span><span>Show</span><span>Renderer</span><span>Panels</span></div>
      <div class="v-tools">
        <svg class="sp s"><use href="#sep"/></svg><svg class="i18"><use href="#cam"/></svg><svg class="i18"><use href="#v2"/></svg><svg class="i18"><use href="#v3"/></svg><svg class="i18"><use href="#v4"/></svg><svg class="i18"><use href="#v5"/></svg><svg class="i18"><use href="#v6"/></svg><svg class="i18"><use href="#v7"/></svg><svg class="sp s"><use href="#sep"/></svg>
        <svg class="i18"><use href="#w1"/></svg><svg class="i18"><use href="#w2"/></svg><svg class="i18"><use href="#w3"/></svg><svg class="i18"><use href="#w4"/></svg><svg class="i18"><use href="#w5"/></svg><svg class="i18"><use href="#w6"/></svg><svg class="i18"><use href="#w7"/></svg><svg class="sp s"><use href="#sep"/></svg>
        <svg class="i18"><use href="#y1"/></svg><span class="hl v"><svg class="i16"><use href="#y2"/></svg></span><svg class="i18"><use href="#y3"/></svg><svg class="i18"><use href="#y4"/></svg><svg class="i18"><use href="#y5"/></svg><svg class="i18"><use href="#y6"/></svg><svg class="i18"><use href="#y7"/></svg><svg class="sp s"><use href="#sep"/></svg>
        <svg class="i18"><use href="#z1"/></svg><svg class="i18"><use href="#z2"/></svg><svg class="i18"><use href="#z3"/></svg><svg class="i18"><use href="#w4"/></svg><svg class="sp s"><use href="#sep"/></svg><svg class="i18"><use href="#z4"/></svg><svg class="sp s"><use href="#sep"/></svg>
        <svg class="i18"><use href="#z5"/></svg><svg class="i18"><use href="#z6"/></svg><svg class="i18"><use href="#z7"/></svg><svg class="sp s"><use href="#sep"/></svg>
        <svg class="i18"><use href="#ap"/></svg><span class="num">0.00</span><svg class="i18"><use href="#ex"/></svg><span class="num">1.00</span><span class="hl v"><svg class="i18"><use href="#on"/></svg></span><span class="txt">sRGB gamma</span><svg class="i10"><use href="#down"/></svg>
      </div>
      <svg class="canvas" width="1064" height="663" viewBox="0 0 1064 663">
        <path d="M0 0h1064v91H0z" fill="#9a9cba"/><path d="M0 91h1064v59H0z" fill="#799bb8"/><path d="M0 150h1064v97H0z" fill="#799b99"/><path d="M0 247h1064v104H0z" fill="#7a7c98"/><path d="M0 351h1064v8H0z" fill="#787b76"/><path d="M0 359h1064v304H0z" fill="#597c78"/>
        <path d="M0 442H679L684 431 690 423 698 421H1064V663H0z" fill="#5a5b78"/><path d="M0 497.500H679L685 485 689 465 691 440V663H0z" fill="#585b56"/><path d="M0 537H679L686 520 691 490V663H0z" fill="#395b58"/><path d="M0 572H679L686 555 691 535V663H0z" fill="#3a3b58"/><path d="M0 595h691v68H0z" fill="#383b36"/><path d="M0 637h691v6H0z" fill="#193b38"/><path d="M0 643h691v5H0z" fill="#1a1b38"/><path d="M0 648h691v15H0z" fill="#181b17"/>
        <path d="M88 312.500h863v20H88z" fill="url(#joints)"/><g stroke="#e312e0" fill="none"><circle cx="956" cy="322.500" r="4"/><path d="M951 322.500h9M956 317v10"/></g>
        <path d="M956.500 305v12" stroke="#70d8c8" stroke-width="1.500"/><path d="M961 322.500h13" stroke="#48f8b8" stroke-width="1.200"/>
        <path d="M24.500 626v13" stroke="#40e848" stroke-width="1.200"/><path d="M11 638.500h13" stroke="#1818d8" stroke-width="1.500"/>
        <g class="ax"><text x="21" y="623" fill="#10f010">y</text><text x="6" y="637" fill="#1818e0">z</text><text x="21" y="637" fill="#f01010">x</text></g>
        <path d="M211.500 254.500v24l5.500-5 5 9.500q2 1.500 3-.5l-4-10h6.500z" fill="#f00" stroke="#000"/>
      </svg>
      <div class="v-foot">Script Editor</div>
    </section>
    <aside class="channel">
      <div class="ch-body">
        <div class="ch-icons"><svg class="i16"><use href="#axis"/></svg><svg class="i16"><use href="#dial"/></svg><svg class="i16"><use href="#graph"/></svg></div>
        <div class="ch-menu"><span>Channels</span><span>Edit</span><span>Object</span><span>Show</span></div>
        <b class="ch-name">ikHandle1</b>
        <dl>
          <dt>Translate X</dt><dd>0</dd><dt>Translate Y</dt><dd>0</dd><dt>Translate Z</dt><dd>-24.995</dd><dt>Rotate X</dt><dd>0</dd><dt>Rotate Y</dt><dd>90</dd><dt>Rotate Z</dt><dd>0</dd><dt>Scale X</dt><dd>1</dd><dt>Scale Y</dt><dd>1</dd><dt>Scale Z</dt><dd>1</dd><dt>Visibility</dt><dd>on</dd><dt>Pole Vector X</dt><dd>0</dd><dt>Pole Vector Y</dt><dd>0</dd><dt>Pole Vector Z</dt><dd>1</dd><dt>Offset</dt><dd>0</dd><dt>Roll</dt><dd>0</dd><dt>Twist</dt><dd>0</dd><dt>Ik Blend</dt><dd>1</dd>
        </dl>
        <b class="inp">INPUTS</b><b class="inp in2">ikSplineSolver</b>
        <div class="ch-box"></div>
        <div class="ch-grip"></div>
        <div class="ch-tab">Anim</div>
        <div class="ch-lmenu"><span>Options</span><span>Help</span></div>
        <div class="ch-lay"><svg class="i16"><use href="#l1"/></svg><svg class="i16"><use href="#l2"/></svg><svg class="i16"><use href="#l3"/></svg><svg class="i16"><use href="#l4"/></svg></div>
        <div class="ch-list"></div>
      </div>
      <div class="vtabs"><span class="on">Channel Box / Layer Editor</span><span>Modeling Toolkit</span><span>Attribute Editor</span></div>
    </aside>
  </main>
  <div class="time">
    <div class="track"><span>5</span><span>10</span><span>15</span><span>20</span><span>25</span><span>30</span><span>35</span><span>40</span><span class="t120">120</span></div>
    <div class="now">1</div>
    <div class="play"><svg class="i18"><use href="#t1"/></svg><svg class="i18"><use href="#t2"/></svg><svg class="i18"><use href="#t3"/></svg><svg class="i18"><use href="#t4"/></svg><svg class="i18 flip"><use href="#t4"/></svg><svg class="i18 flip"><use href="#t3"/></svg><svg class="i18 flip"><use href="#t2"/></svg><svg class="i18 flip"><use href="#t1"/></svg></div>
  </div>
  <div class="range"><i></i><span class="f">1</span><div class="bar"><div><em></em>1</div></div><span class="lay">No Anim Layer</span><svg class="sp"><use href="#sep"/></svg><span>24 fps</span><svg class="i10"><use href="#down"/></svg><svg class="i18"><use href="#n1"/></svg><svg class="sp"><use href="#sep"/></svg><svg class="i18"><use href="#n2"/></svg><svg class="i20"><use href="#n3"/></svg></div>
  <div class="cmd"><i></i><svg class="i20"><use href="#scr"/></svg></div>
  <div class="help">ool: Use manipulator to move object(s). Ctrl+MMB+drag to move components along normals. Shift+drag manipulator</div>
  <footer class="task">
    <div class="search"><i></i><span>Type here to search</span><svg width="14" height="20" viewBox="0 0 14 20"><path d="M4.500 2h5v10h-5zM1.500 9v5.500h11V9M7 15v3M4 18h6" fill="none" stroke="#333"/></svg></div>
    <svg class="i20" viewBox="0 0 20 20"><path d="M2 3V1M12 3V1M2 3h10M2 6h10v8H2zM2 17h10M2 17v2M12 17v2M17 1v6M17 12v7" fill="none" stroke="#fff" stroke-width="1.300"/><path d="M15.500 7h3v3h-3z" fill="#fff"/></svg>
    <span class="m-tile"><svg class="i24"><use href="#maya"/></svg></span>
    <svg class="i24" viewBox="0 0 24 24"><circle cx="12" cy="12" r="11" fill="#f8d048"/><path d="M12 12L2.500 6.500A11 11 0 0121.500 6.500H12z" fill="#e05040"/><path d="M12 12L2.500 6.500A11 11 0 0012 23l4-8z" fill="#30a050"/><circle cx="12" cy="12" r="5" fill="#4888e8" stroke="#eee" stroke-width="1.300"/></svg>
    <span class="pc"><b>PC</b></span><span></span>
    <svg class="i18" viewBox="0 0 18 18"><g fill="none" stroke="#fff" stroke-width="1.300"><circle cx="6" cy="9" r="2.500"/><circle cx="12" cy="5" r="3"/><path d="M2 17c0-7 8-7 8 0M9 11c4-4 7-1 7 2"/></g></svg>
    <svg class="i12" viewBox="0 0 12 12"><path d="M1 8l5-4.500L11 8" fill="none" stroke="#fff" stroke-width="1.500"/></svg>
    <svg class="i18" viewBox="0 0 18 18"><path d="M4 5h12v8H6M2 3h4v4H2zM4 7v7M8 16h7M11 13v3" fill="none" stroke="#fff" stroke-width="1.200"/></svg>
    <svg class="i18" viewBox="0 0 18 18"><path d="M2 7h3l3-3v10l-3-3H2zM10 7q2 2 0 4M12 5q4 4 0 8M14 3q6 6 0 12" fill="none" stroke="#fff" stroke-width="1.100"/></svg>
    <svg class="i18" viewBox="0 0 18 18"><path d="M14 2L7 13l-2 2 1-4 7-9zM1 13q1-3 4-2M3 16q8 2 7-3 1-3 5 0l2-2" fill="none" stroke="#fff" stroke-width="1.500"/></svg>
    <div class="clock"><span>11:54 AM</span><span>10/11/2018</span></div>
    <div class="note"><svg width="18" height="18" viewBox="0 0 18 18"><path d="M1 1h16v12H9l-4 4v-4H1z" fill="#fff"/><path d="M4 4.500h10M4 7.500h10M4 10.500h7" stroke="#1a1b38"/></svg><b>1</b></div>
  </footer>
</section>

<div class="strip"><i></i><em></em><span>11:54 AM</span></div>

<section class="tool">
  <header><svg class="i14"><use href="#maya"/></svg><span>Tool Settings</span><svg class="i12"><use href="#min"/></svg><svg class="i12"><use href="#max"/></svg><svg class="i12"><use href="#x"/></svg></header>
  <div class="tl1"><span>Move Tool</span><button>Reset Tool</button><button>Tool Help</button></div>
  <div class="tl2"><svg class="i11"><use href="#down"/></svg><b>Move Settings</b></div>
  <div class="tl3"><span>Axis Orientation:</span><svg class="i6"><use href="#down"/></svg><span class="ob">Object</span></div>
  <div class="tl4"><svg class="i6"><use href="#down"/></svg><i>0.0000</i><i>74.9984</i><i>-90.0000</i></div>
  <div class="tl5"><span>Pivot:</span><button>Edit Pivot</button><button>Reset</button></div>
</section>

<section class="pad">
  <header><svg width="16" height="17" viewBox="0 0 16 17"><path d="M4 2h11v14H3z" fill="#a89878"/><path d="M3 2h11l-1.500 13H0z" fill="#8fcfdd"/><path d="M3 2h11l-.3 3H2.600z" fill="#c8e8ee"/><path d="M4 1v2M6 1v2M8 1v2M10 1v2M12 1v2" stroke="#555"/></svg><span>10-9 IK spline - Notepad</span><svg class="i12"><use href="#min"/></svg><svg class="i12"><use href="#max"/></svg><svg class="i12"><use href="#x"/></svg></header>
  <nav><span>File</span><span>Edit</span><span>Format</span><span>View</span><span>Help</span></nav>
  <div class="pad-body"><pre>Includes joints, curve, control joints, and ctrls.
Ctrls constrain control joints. control joints skin cluster curve. Spline IK solver curve to joint.

Creating a straight chain of joints.
Select all, channel control, move joint orients to left and make them keyable.
Make rotations all 0.
Now using the translate x, you can elongate the whole chain.

Under skeleton -&gt; IK Spline Handle Tool
To apply, it's the same thing. Apply first and last joint. That'll create a curve. The higher the number of spans, the m

Convert  tool <u></u></pre><div class="pad-scroll"><svg width="10" height="10" viewBox="0 0 10 10"><path d="M1.500 7L5 3.500 8.500 7" fill="none" stroke="#505050" stroke-width="2"/></svg><i></i></div></div>
</section>
</body>
</html>
```
FILE: styles.css
```css
* { box-sizing: border-box; }
body { margin: 0; width: 1847px; height: 1047px; overflow: hidden; position: relative; background: #111; font: 12px/14px "Open Sans", "Noto Sans", sans-serif; color: #d2d6d0; }
i, em { font-style: normal; }
svg { display: block; fill: #c4c8c2; flex: none; overflow: visible; }
.sprite { position: absolute; width: 0; height: 0; overflow: hidden; }
.i6 { width: 7px; height: 7px; fill: #9ca09a; }
.i10 { width: 10px; height: 10px; }
.i11 { width: 11px; height: 11px; fill: #fff; }
.i12 { width: 12px; height: 12px; }
.i14 { width: 14px; height: 14px; }
.i16 { width: 16px; height: 16px; }
.i18 { width: 19px; height: 19px; }
.i20 { width: 19px; height: 19px; }
.i24 { width: 23px; height: 23px; }
.sp { width: 6px; height: 20px; }
.sp.s { height: 15px; }
.flip { transform: scaleX(-1); }
.hl { display: grid; place-items: center; width: 21px; height: 21px; background: #589bb8; }

/* window behind */
.back { position: absolute; inset: 0 0 7px 0; background: #444; color: #ccc; }
.back-title { height: 23px; background: linear-gradient(#fff, #e4e4e4 10px, #fff 11px); color: #777; display: flex; align-items: flex-start; font-size: 12px; line-height: 21px; overflow: hidden; white-space: pre; }
.bt1 { width: 501px; padding-left: 4px; letter-spacing: -.42px; }
.bt2 { flex: 1; padding-left: 4px; letter-spacing: -.42px; }
.bctl { width: 121px; display: grid; grid-template-columns: 45px 46px 30px; color: #777; padding-top: 4px; }
.back-side { width: 58px; margin-left: 1789px; height: 1017px; display: flex; flex-direction: column; }
.back-side i { display: block; background: #2b2b2b; }
.b-top { display: flex; height: 27px; gap: 3px; padding-top: 3px; }
.b-drop { width: 30px; height: 19px; background: #5d5d5d; display: flex; align-items: center; justify-content: flex-end; padding-right: 4px; }
.b-lock { width: 22px; height: 23px; margin-top: -1px; border: solid #2be02b; border-width: 0 1px; display: grid; place-items: center; background: linear-gradient(#2be02b, #2be02b) 0 0 / 5px 1px no-repeat, linear-gradient(#2be02b, #2be02b) 100% 0 / 5px 1px no-repeat, linear-gradient(#2be02b, #2be02b) 0 100% / 5px 1px no-repeat, linear-gradient(#2be02b, #2be02b) 100% 100% / 5px 1px no-repeat; }
.b-icons { height: 29px; display: flex; align-items: center; justify-content: flex-end; gap: 3px; padding-right: 3px; border-bottom: 2px solid #393939; overflow: hidden; }
.b-icons .hl { background: #5a89ab; }
.b-tabs { height: 18px; margin: 2px 3px 0 0; background: #2b2b2b; }
.b-shelf { height: 48px; padding: 4px 8px 0 0; display: flex; justify-content: flex-end; border-bottom: 2px solid #383838; }
.scroll { width: 11px; height: 33px; background: #2f322e; display: flex; flex-direction: column; align-items: center; justify-content: space-between; }
.scroll svg { width: 9px; height: 10px; fill: #d0d4ce; }
.scroll i, .scroll em { width: 9px; height: 9px; border-radius: 5px; background: #5c5f5a; }
.b-set { height: 17px; display: flex; align-items: center; gap: 5px; font-size: 11px; color: #999; margin-top: 1px; }
.b-set span { width: 27px; background: #393939; line-height: 17px; border-right: 1px solid #2b2b2b; overflow: hidden; }
.b-set .dim { opacity: .5; }
.b-axis { height: 59px; display: flex; gap: 4px; padding-top: 2px; margin-left: -4px; }
.b-fields { display: flex; flex-direction: column; gap: 1px; width: 52px; height: 208px; }
.b-fields i { height: 15px; }
.b-fields .last { background: #343434; }
.b-box1 { width: 53px; height: 271px; background: #2b2b2b; }
.b-strip { height: 17px; width: 53px; margin-top: 12px; background: #393939; }
.b-lay { height: 48px; display: flex; gap: 7px; padding: 26px 0 0 6px; border-right: 1px solid #333; width: 54px; }
.b-box2 { width: 49px; height: 134px; background: #2b2b2b; }
.b-arr { height: 15px; width: 53px; background: #3a3a3a; border: solid #2e2e2e; border-width: 0 1px 1px 0; padding: 2px 0 0 36px; }
.b-row { height: 43px; margin-top: 5px; border-top: 2px solid #363636; display: flex; align-items: center; gap: 5px; padding-left: 4px; }
.b-row.two { height: 36px; margin: 0; gap: 12px; padding-left: 0; margin-left: -2px; }
.b-row.two + .b-cmd { border-top: 2px solid #363636; padding-top: 4px; }
.b-cmd { display: flex; gap: 6px; }
.b-cmd i { width: 24px; height: 24px; }

/* main window */
.maya { position: absolute; left: 0; top: 10px; width: 1789px; height: 1030px; overflow: hidden; background: #585b56; border-top: 1px solid #9a9c9a; box-shadow: 0 0 4px rgba(0,0,0,.4); display: flex; flex-direction: column; }
.maya > * { flex: none; }
.title { height: 30px; background: linear-gradient(#fff 7px, #f8fdf8 7px); color: #222; display: grid; grid-template-columns: 240px 23px 150px 1fr 43px 44px 31px; align-items: center; line-height: 35px; font-size: 12px; white-space: nowrap; border-bottom: 1px solid #3c3f3a; }
.title .i12 { margin-top: 1px; width: 11px; }
.t-a { font-size: 11.500px; letter-spacing: -.31px; margin-left: -1px; }
.menubar { height: 24px; display: grid; grid-template-columns: 19px 46px 43px 49px 50px 61.500px 57.500px 35.500px 51px 62.500px 48px 44px 48px 50px 1fr 70px 168px 22px 20px; font-size: 11px; line-height: 17px; letter-spacing: -.05px; white-space: nowrap; }
.menubar .ws { margin-top: 3px; }
.menubar svg.ws { margin-top: 6px; }
.menubar svg.i18 { margin-top: 3px; width: 17px; }
.dimt { color: #b4b8b2; }
.status { height: 27px; padding: 0 2px 0 32px; display: grid; align-items: center; justify-items: center; border-bottom: 2px solid #3c3f3a; font-size: 11px;
 grid-template-columns: 22px 20px repeat(5, 22px) 22px 20px 23px 22px 22px 22px 12px repeat(8, 22px) 24px 21px 21px repeat(6, 22px) 19px 96px 22px 17px 96px 22px 22px repeat(8, 22px) 21px 23px 24px 71px 22px 1fr 23px 22px 23px 22px 22px; }
.status .hl { justify-self: start; }
.status .txt { padding-top: 1px; letter-spacing: -.15px; }
.txt { justify-self: start; padding-left: 5px; white-space: nowrap; }
.ipr { display: grid; }
.ipr > * { grid-area: 1 / 1; }
.ipr b { color: #222; font: bold 8px/24px "Liberation Sans", sans-serif; text-align: center; }
.sign { justify-self: start; font: bold 12px/14px "Liberation Sans", sans-serif; color: #fff; letter-spacing: -.4px; padding-top: 1px; }
.tabs { height: 17px; margin: 3px 3px 0 0; background: #383b36; display: grid; grid-template-columns: 88px 92px 72px 62px 73px 76px 34px 78px 60px 58px 54px 55px 102px 54px; font-size: 11px; line-height: 21px; color: #979b95; text-align: center; white-space: nowrap; }
.tabs span:first-child { text-align: left; margin-left: -1px; letter-spacing: -.15px; }
.tabs .on { background: #585b56; color: #f0f4ee; border-radius: 2px 2px 0 0; font-weight: 500; }
.shelf { height: 46px; display: flex; align-items: center; margin-left: 0; border-bottom: 2px solid #3c3f3a; padding: 0 8px 3px 0; }
.shelf .s { width: 33.650px; height: 26px; display: grid; place-items: center; flex: none; }
.shelf .s:first-child { margin-left: -15.400px; }
.shelf .s svg { width: 25px; height: 25px; }
.shelf > i { width: 11.500px; flex: none; height: 33px; background: linear-gradient(#8b8f89, #8b8f89) center / 2px 100% no-repeat; }
.shelf .scroll { margin-left: auto; }
.shelf .bigt { color: #e09c52; font: bold 30px/26px "Liberation Serif", serif; }
.svgt b { width: 23px; height: 23px; background: #e09c52; color: #333; font: bold 11px/21px "Liberation Sans", sans-serif; text-align: center; letter-spacing: -.3px; }
.zero > * { grid-area: 1 / 1; }
.zero b { align-self: end; color: #58c0d8; font: bold 10px/11px "Liberation Sans", sans-serif; z-index: 1; }
.main { height: 726px; display: grid; grid-template-columns: 255px 1073px 461px; background: #383b36; }

.outliner { display: flex; flex-direction: column; width: 252px; font-size: 11px; }
.o-tabs { height: 17px; padding-top: 2px; display: flex; }
.o-tabs b { background: #585b56; width: 53px; padding-left: 1px; font-weight: 600; font-size: 11px; line-height: 17px; letter-spacing: -.3px; border-radius: 0 3px 0 0; color: #e8ece6; }
.o-body { height: 707px; border: 1px solid #8b8f89; border-width: 1px 2px 1px 0; background: #585b56; }
.o-menu { display: grid; grid-template-columns: 50px 42.500px 50px; height: 25px; line-height: 19px; letter-spacing: -.1px; }
.o-search { display: flex; height: 18px; gap: 7px; }
.o-search div { flex: 1; background: #383b36; margin-right: 2px; display: flex; align-items: center; justify-content: space-between; padding: 0 4px 0 3px; color: #8c908a; border-radius: 2px; }
.o-list { display: flex; height: 643px; margin-top: 1px; background: #383b36; }
.o-list ul { list-style: none; margin: 0; padding: 0 2px 0 0; width: 240px; line-height: 19px; }
.o-list li { height: 19.080px; padding-left: 26px; display: flex; align-items: center; gap: 3px; white-space: nowrap; letter-spacing: -.08px; }
.o-list li:nth-child(n+8) { padding-left: 25px; gap: 1px; }
.o-list .off { color: #767a74; }
.o-list .br { padding-left: 13px; gap: 3px; }
.o-list .br svg { margin-left: 1px; }
.box { width: 9px; height: 9px; border: 1px solid #9a9e98; font-size: 10px; line-height: 6px; text-align: center; color: #9a9e98; }
.o-list .kid { padding-left: 17px; gap: 3px; letter-spacing: -.15px; }
.o-list .kid .elbow { height: 17px; width: 8px; border: solid #9a9e98; border-width: 0 0 1px 1px; margin: -17px -4px 0 0; }
.o-list .sel { background: #589bb8; color: #fff; }
.vs { width: 9px; display: flex; flex-direction: column; align-items: center; padding: 1px 0 2px; }
.vs i { flex: 1; width: 9px; margin: 1px 0; background: #585b56; border-radius: 4px; }
.hs { height: 10px; display: flex; align-items: center; background: #383b36; margin-left: -5px; }
.hs i { width: 220px; height: 10px; background: #585b56; border-radius: 4px; }
.grip { width: 86px; margin: 2px 0 0 78px; background: repeating-linear-gradient(90deg, #8b8f89 0 1px, transparent 1px 3px); height: 2px; }

.view { background: #585b56; padding: 0 0 0 4px; font-size: 11px; }
.v-menu { height: 20px; padding-left: 8px; display: grid; grid-template-columns: 38.500px 55.500px 56px 42.500px 59px 60px; line-height: 24px; letter-spacing: -.1px; }
.v-tools { height: 20px; display: grid; align-items: center; justify-items: center;
 grid-template-columns: 10px repeat(7, 18.300px) 10px repeat(7, 18.300px) 11px repeat(7, 18.300px) 9.500px repeat(4, 18.300px) 10px 19px 9.500px repeat(3, 18.500px) 11px 20px 37px 22px 37px 22px 113px 22px; }
.v-tools .i18 { width: 17px; height: 17px; }
.hl.v { width: 17px; height: 17px; }
.v-tools .txt { padding: 2px 0 0 4px; letter-spacing: -.15px; }
.num { background: #383b36; width: 36px; height: 13px; line-height: 14px; padding-left: 4px; border-radius: 2px; }
.canvas { overflow: hidden; }
.ax { font: bold 10px "Liberation Sans", sans-serif; }
.v-foot { height: 18px; margin: 4px 0 0 -4px; background: #383b36; border-bottom: 1px solid #686b66; padding-left: 12px; line-height: 24px; color: #a4a8a2; }

.channel { display: grid; grid-template-columns: 442px 16px; border-left: 3px solid #383b36; font-size: 11px; background: #383b36; }
.ch-body { background: #585b56; padding-left: 3px; display: flex; flex-direction: column; width: 442px; }
.ch-body > * { flex: none; }
.ch-icons { height: 21px; padding: 3px 5px 0 0; display: flex; gap: 4px; justify-content: flex-end; }
.ch-menu { height: 20px; display: grid; grid-template-columns: 61.500px 33.500px 47px 60px; padding-left: 6px; line-height: 20px; letter-spacing: -.1px; }
.ch-name { height: 16px; padding-left: 0; line-height: 18px; font-weight: 700; color: #bcc0ba; letter-spacing: -.3px; }
.ch-body dl { margin: 0; width: 435px; display: grid; grid-template-columns: 1fr 90px; column-gap: 7px; grid-auto-rows: 15.270px; text-align: right; color: #b4b8b2; }
.ch-body dt { line-height: 17px; font-size: 10.600px; letter-spacing: -.32px; }
.ch-body dd { margin: 0; height: 14px; line-height: 14px; background: #383b36; text-align: left; padding-left: 9px; color: #e0e4de; letter-spacing: -.1px; }
.inp { height: 15px; line-height: 15px; padding-left: 0; font-weight: 700; color: #c4c8c2; letter-spacing: -.35px; }
.in2 { padding-left: 9px; height: 30px; }
.ch-box { height: 147px; margin-right: 3px; background: #383b36; }
.ch-grip { height: 12px; background: repeating-linear-gradient(90deg, #8b8f89 0 1px, transparent 1px 3px) 144px 3px / 146px 2px no-repeat; }
.ch-tab { height: 16px; margin-right: 2px; background: #383b36; color: #a4a8a2; padding-left: 69px; line-height: 20px; }
.ch-lmenu { display: grid; grid-template-columns: 55.500px 40px; height: 20px; padding-left: 53px; line-height: 22px; }
.ch-lay { height: 26px; display: grid; grid-template-columns: 22px 26px 22px 16px; justify-content: end; padding: 3px 7px 0 0; }
.ch-list { height: 137px; margin-right: 6px; background: #383b36; border-bottom: 1px solid #6a6d68; }
.vtabs { display: flex; flex-direction: column; padding-top: 2px; }
.vtabs span { writing-mode: vertical-rl; color: #9a9e98; line-height: 15px; width: 15px; font-size: 10.500px; letter-spacing: .06px; padding: 12px 0 0; white-space: nowrap; height: 105px; }
.vtabs .on { height: 149px; background: #585b56; color: #e8ece6; border-radius: 0 3px 3px 0; padding-top: 10px; letter-spacing: -.1px; }

.time { height: 36px; display: flex; padding-top: 6px; border-bottom: 2px solid #3c3f3a; box-shadow: inset 0 1px #3c3f3a; }
.track { flex: none; width: 1506px; height: 27px; background: repeating-linear-gradient(90deg, #8b8f89 0 2px, transparent 2px 63.820px) 16.500px 12px / 500px 15px no-repeat, #383b36; display: flex; color: #7e827c; font-size: 11px; line-height: 9px; padding-left: 18px; }
.track span { width: 63.800px; flex: none; }
.track .t120 { margin-left: 957px; width: 20px; padding-left: 1px; position: relative; letter-spacing: -.2px; }
.track .t120::before { content: ""; position: absolute; left: -1px; top: 13px; width: 2px; height: 14px; background: #8b8f89; }
.now { width: 85px; height: 17px; margin: 5px 7px 0 7px; background: #383b36; border-radius: 2px; padding-left: 5px; line-height: 19px; font-size: 11px; }
.play { display: flex; gap: 3.100px; padding-top: 4px; margin-left: -1px; }
.range { height: 35px; display: grid; grid-template-columns: 51px 92px 1310px 98px 38px 74px 24.500px 28.500px 15.500px 27px 1fr; align-items: center; border-bottom: 2px solid #3c3f3a; font-size: 11px; }
.range > i { width: 43px; height: 24px; background: #383b36; border-radius: 0 2px 2px 0; }
.range > span { padding-top: 1px; letter-spacing: -.15px; }
.range .f { width: 84px; height: 24px; background: #383b36; border-radius: 2px; line-height: 25px; padding-left: 5px; }
.bar { height: 24px; background: #383b36; padding: 2px 6px; margin-right: 20px; margin-left: -1px; }
.bar div { background: #585b56; border-radius: 4px; height: 19px; display: flex; align-items: center; gap: 4px; padding: 2px 3px 1px; font-size: 11px; }
.bar em { width: 15px; height: 13px; border-radius: 3px; background: #9a9e98; }
.range .lay { padding-left: 16px; white-space: nowrap; }
.range .sp { margin-left: 19px; }
.range svg.sp ~ svg.sp { margin-left: 2px; }
.cmd { height: 31px; display: flex; gap: 5px; padding: 4px 8px 0 2px; border-bottom: 2px solid #3c3f3a; }
.cmd i { flex: 1; height: 22px; background: #383b36; border-radius: 2px; }
.help { height: 22px; font-size: 10px; line-height: 25px; color: #b4b8b2; white-space: nowrap; width: 520px; letter-spacing: -.34px; }
.task { height: 31px; background: #1a1b38; color: #fff; display: grid; grid-template-columns: 321px 50px 42px 53px 46px 1fr 42px 26px 23px 25px 26px 68px 46px; align-items: center; justify-items: center; }
.task .search { width: 321px; height: 31px; background: #f8fdf8; display: flex; align-items: center; color: #444; font-size: 13px; letter-spacing: -.1px; border-bottom: 1px solid #ccc; }
.task .search i { width: 20px; height: 20px; border: 3px solid #1c1f1c; border-radius: 50%; margin-right: 9px; margin-top: 8px; }
.task .search span { width: 265px; padding-top: 9px; }
.task > svg, .search svg, .pc { margin-top: 7px; }
.m-tile { background: #5a605c; width: 42px; height: 31px; display: grid; place-items: center; padding-top: 7px; }
.pc { width: 24px; height: 20px; background: linear-gradient(120deg, #28d888, #40d8d0 60%, #f0f040); padding: 2px 3px; }
.pc b { display: block; height: 16px; background: #111; font: bold 11px/13px "Liberation Sans", sans-serif; text-align: center; }
.clock { display: flex; flex-direction: column; text-align: center; font-size: 12px; line-height: 17px; height: 31px; letter-spacing: -.4px; padding-top: 1px; white-space: nowrap; }
.note { position: relative; width: 40px; padding: 10px 0 0 2px; height: 31px; border-right: 1px solid #777a8a; }
.note b { position: absolute; left: 11px; top: 18px; width: 16px; height: 16px; border-radius: 50%; background: #3c4048; font-size: 11px; text-align: center; line-height: 16px; }

.strip { position: absolute; left: 0; bottom: 0; width: 1847px; height: 7px; background: #0d0d0d; display: grid; grid-template-columns: 319px 590px 48px 780px 1fr; overflow: hidden; color: #eee; font-size: 12px; line-height: 14px; }
.strip i { background: #f0f0f0; }
.strip em { grid-column: 3; background: #555; }
.strip span { grid-column: 5; padding-top: 3px; white-space: nowrap; letter-spacing: -.4px; }

/* tool settings */
.tool { position: absolute; left: 950px; top: 625px; width: 447px; height: 160px; background: #585b56; font-size: 11px; border: 1px solid #8b8f89; border-width: 1px 1px 0 1px; overflow: hidden; box-shadow: 0 0 6px rgba(0,0,0,.35); }
.tool header { height: 29px; background: #f8fdf8; color: #8a8e8c; display: grid; grid-template-columns: 21px 302px 43px 44px 30px; padding-left: 7px; align-items: center; font-size: 12px; letter-spacing: -.2px; border-bottom: 1px solid #777; }
.tool button { background: none; border: 1px solid #7c807a; border-radius: 2px; color: #f0f4ee; font: 600 11px/19px "Open Sans", sans-serif; height: 22px; padding: 0; letter-spacing: -.15px; }
.tl1 { display: grid; grid-template-columns: 241px 104px 87px; column-gap: 5px; padding: 2px 0 0 2px; color: #b4b8b2; line-height: 21px; }
.tl2 { display: flex; align-items: center; gap: 14px; padding: 7px 0 0 13px; height: 28px; }
.tl2 .i11 { margin-top: -3px; }
.tl2 b { font-weight: 700; color: #c4c8c2; letter-spacing: -.35px; }
.tl3 { display: grid; grid-template-columns: 133px 24px 100px; align-items: center; justify-items: end; height: 26px; padding: 4px 0 0 0; }
.tl3 > span:first-child, .tl5 span { color: #b4b8b2; letter-spacing: -.15px; }
.tl3 .ob { justify-self: start; padding-left: 10px; }
.tl3 svg { margin-right: 4px; }
.tl4 { display: flex; align-items: center; gap: 4px; height: 29px; padding: 3px 0 0 145px; }
.tl4 svg { margin-right: 6px; }
.tl4 i { width: 57.500px; height: 17px; background: #383b36; border-radius: 2px; padding-left: 5px; line-height: 18px; color: #e0e4de; }
.tl5 { display: grid; grid-template-columns: 132px 97px 48px; column-gap: 2px; text-align: right; padding-top: 5px; line-height: 20px; }
.tl5 button { margin-left: 6px; text-align: center; }
.tl5 button:nth-child(2) { width: 96px; }
.tl5 button:nth-child(3) { width: 48px; }

/* notepad */
.pad { position: absolute; left: 497px; top: 784px; width: 981px; height: 256px; background: #fff; border: 1px solid #1979ca; border-bottom: 0; color: #000; overflow: hidden; box-shadow: 0 0 8px rgba(0,0,0,.35); }
.pad header { height: 30px; display: grid; grid-template-columns: 20px 830px 45px 46px 30px; padding-left: 9px; align-items: center; font-size: 12px; letter-spacing: -.25px; }
.pad nav { height: 20px; display: grid; grid-template-columns: 32px 34px 52px 39px 40px; padding-left: 7px; font-size: 12px; line-height: 20px; letter-spacing: -.25px; border-bottom: 1px solid #eaeaea; }
.pad-body { display: flex; height: 206px; }
.pad pre { margin: 0; width: 959px; padding: 1px 0 0 4px; font: 13.300px/18px "DejaVu Sans Mono", monospace; overflow: hidden; height: 206px; }
.pad pre u { border-left: 1px solid #000; }
.pad-scroll { width: 15px; margin-left: 4px; background: #f0f0f0; display: flex; flex-direction: column; align-items: center; padding-top: 4px; }
.pad-scroll i { width: 15px; flex: 1; background: #cdcdcd; margin-top: 33px; }
```
